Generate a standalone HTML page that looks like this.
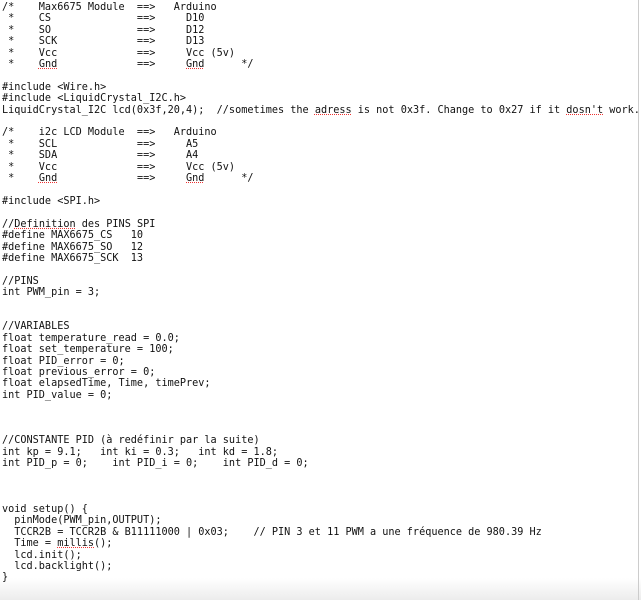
<!DOCTYPE html>
<html><head><meta charset="utf-8"><style>
html,body{margin:0;padding:0;background:#fff;width:641px;height:600px;overflow:hidden;}
pre{margin:0;position:absolute;left:2px;top:2px;font-family:"DejaVu Sans Mono","Liberation Mono",monospace;font-size:10.2px;line-height:11.4px;color:#111;}
.u{text-decoration:underline dotted #e33;}
.shade{position:absolute;left:0;right:0;bottom:0;height:22px;background:linear-gradient(#fff,#ececec);}
.rb{position:absolute;right:2px;top:0;bottom:0;width:1px;background:#ccc;}
</style></head><body>
<div class="shade"></div><div class="rb"></div>
<pre>/*    Max6675 Module  ==>   Arduino
 *    CS              ==>     D10
 *    SO              ==>     D12
 *    SCK             ==>     D13
 *    Vcc             ==>     Vcc (5v)
 *    <span class="u">Gnd</span>             ==>     <span class="u">Gnd</span>      */

#include &lt;Wire.h&gt;
#include &lt;LiquidCrystal_I2C.h&gt;
LiquidCrystal_I2C lcd(0x3f,20,4);  //sometimes the <span class="u">adress</span> is not 0x3f. Change to 0x27 if it <span class="u">dosn't</span> work.

/*    i2c LCD Module  ==>   Arduino
 *    SCL             ==>     A5
 *    SDA             ==>     A4
 *    Vcc             ==>     Vcc (5v)
 *    <span class="u">Gnd</span>             ==>     <span class="u">Gnd</span>      */

#include &lt;SPI.h&gt;

//<span class="u">Definition</span> des PINS SPI
#define MAX6675_CS   10
#define MAX6675_SO   12
#define MAX6675_SCK  13

//PINS
int PWM_pin = 3;


//VARIABLES
float temperature_read = 0.0;
float set_temperature = 100;
float PID_error = 0;
float previous_error = 0;
float elapsedTime, Time, timePrev;
int PID_value = 0;



//CONSTANTE PID (à redéfinir par la suite)
int kp = 9.1;   int ki = 0.3;   int kd = 1.8;
int PID_p = 0;    int PID_i = 0;    int PID_d = 0;



void setup() {
  pinMode(PWM_pin,OUTPUT);
  TCCR2B = TCCR2B &amp; B11111000 | 0x03;    // PIN 3 et 11 PWM a une fréquence de 980.39 Hz
  Time = <span class="u">millis</span>();
  lcd.init();
  lcd.backlight();
}</pre>
</body></html>
